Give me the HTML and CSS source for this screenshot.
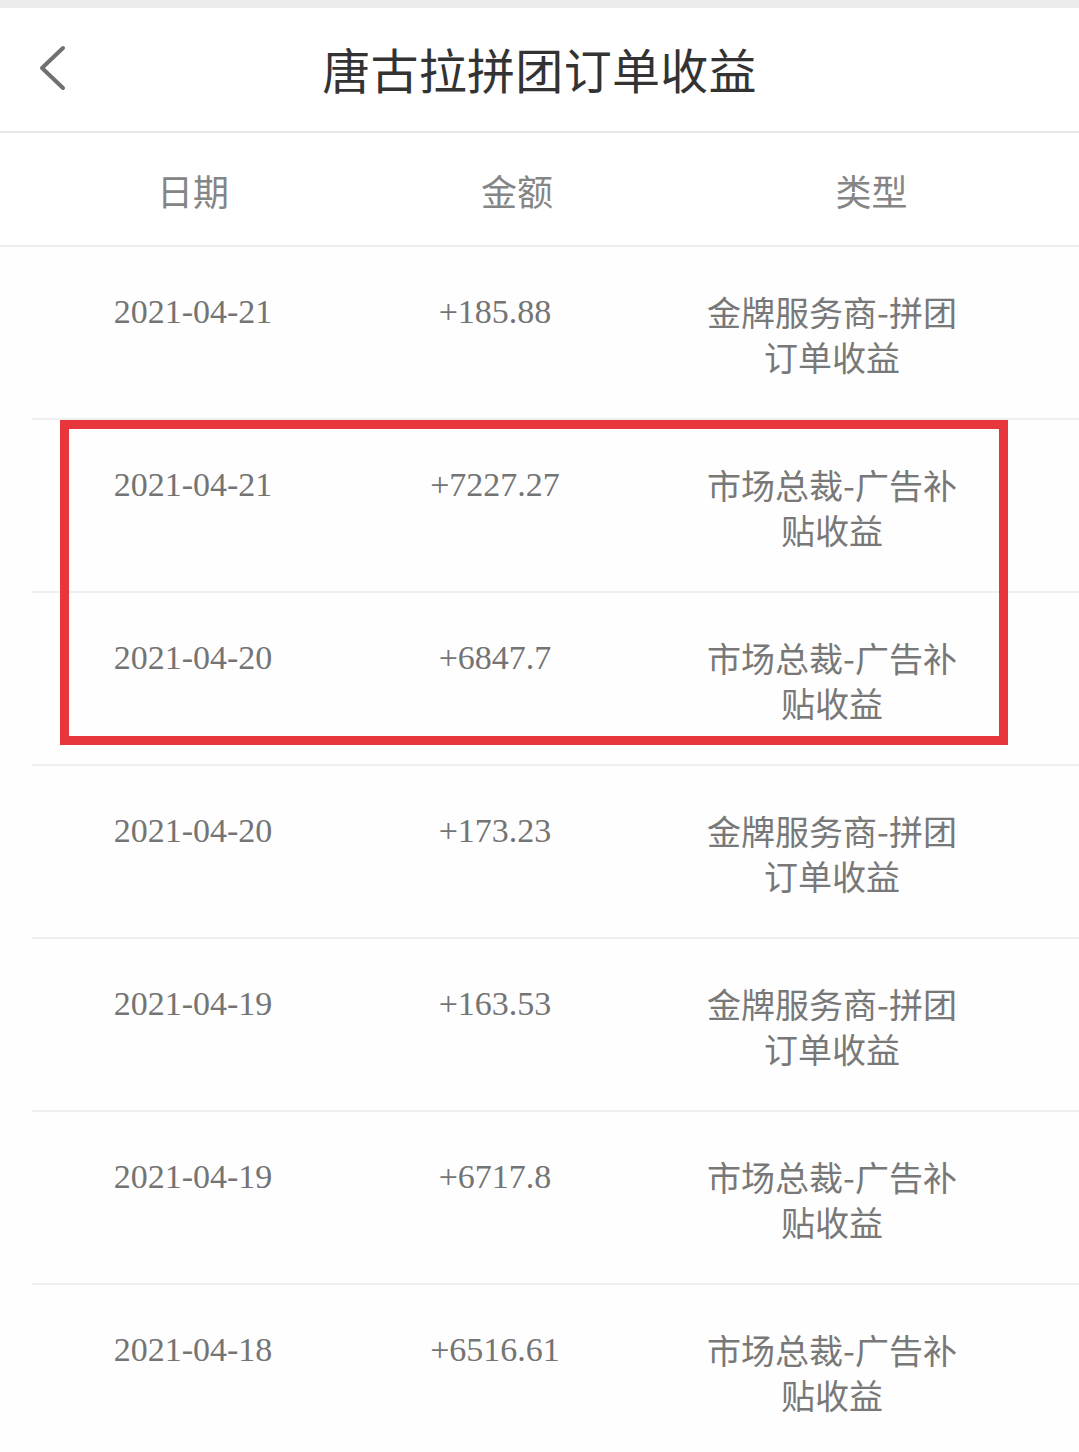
FILE: index.html
```html
<!DOCTYPE html>
<html lang="zh-CN">
<head>
<meta charset="utf-8">
<title>唐古拉拼团订单收益</title>
<link rel="stylesheet" href="styles.css">
</head>
<body>
<div class="page">
  <div class="status-strip"></div>
  <header class="nav">
    <svg class="back" width="40" height="60" viewBox="0 0 40 60">
      <polyline points="25,10 4,30 25,50" fill="none" stroke="#707070" stroke-width="4" stroke-linecap="round" stroke-linejoin="round"/>
    </svg>
    <h1 class="title">唐古拉拼团订单收益</h1>
  </header>
  <div class="thead">
    <div class="th th-date">日期</div>
    <div class="th th-amt">金额</div>
    <div class="th th-type">类型</div>
  </div>
  <div class="rows">
    <div class="row">
      <div class="cell date">2021-04-21</div>
      <div class="cell amt">+185.88</div>
      <div class="cell type">金牌服务商-拼团订单收益</div>
    </div>
    <div class="marked">
      <div class="row">
        <div class="cell date">2021-04-21</div>
        <div class="cell amt">+7227.27</div>
        <div class="cell type">市场总裁-广告补贴收益</div>
      </div>
      <div class="row">
        <div class="cell date">2021-04-20</div>
        <div class="cell amt">+6847.7</div>
        <div class="cell type">市场总裁-广告补贴收益</div>
      </div>
      <div class="highlight"></div>
    </div>
    <div class="row">
      <div class="cell date">2021-04-20</div>
      <div class="cell amt">+173.23</div>
      <div class="cell type">金牌服务商-拼团订单收益</div>
    </div>
    <div class="row">
      <div class="cell date">2021-04-19</div>
      <div class="cell amt">+163.53</div>
      <div class="cell type">金牌服务商-拼团订单收益</div>
    </div>
    <div class="row">
      <div class="cell date">2021-04-19</div>
      <div class="cell amt">+6717.8</div>
      <div class="cell type">市场总裁-广告补贴收益</div>
    </div>
    <div class="row">
      <div class="cell date">2021-04-18</div>
      <div class="cell amt">+6516.61</div>
      <div class="cell type">市场总裁-广告补贴收益</div>
    </div>
  </div>
</div>
</body>
</html>
```

FILE: styles.css
```css
* { box-sizing: border-box; }
html, body {
  margin: 0;
  padding: 0;
  background: #fefefe;
}
body {
  font-family: "Noto Sans CJK SC", "Noto Sans", sans-serif;
  width: 1079px;
  overflow-x: hidden;
}
.page {
  width: 1079px;
}
.status-strip {
  height: 8px;
  background: #ececec;
}
.nav {
  height: 125px;
  border-bottom: 2px solid #e6e6e6;
  display: flex;
  align-items: center;
  justify-content: center;
  position: relative;
  background: #ffffff;
}
.back {
  position: absolute;
  left: 38px;
  top: 30px;
}
.title {
  margin: 0;
  font-size: 48px;
  font-weight: 400;
  color: #333333;
  letter-spacing: 0.3px;
  line-height: 1;
  margin-top: -4px;
}
.thead {
  height: 114px;
  border-bottom: 2px solid #ececec;
  display: grid;
  grid-template-columns: 386px 262px 1fr;
  align-items: center;
  background: #ffffff;
}
.th {
  text-align: center;
  font-size: 36px;
  color: #858585;
  line-height: 1;
  margin-top: 2px;
}
.th-type {
  transform: translateX(8px);
}
.rows {
  margin-left: 32px;
}
.row {
  height: 173px;
  border-bottom: 2px solid #efefef;
  display: grid;
  grid-template-columns: 322px 282px 392px;
  align-items: start;
  padding-top: 42px;
}
.cell {
  text-align: center;
  font-size: 34px;
  line-height: 45px;
  color: #747474;
}
.date, .amt {
  font-family: "Liberation Serif", "Times New Roman", serif;
}
.type {
  padding: 0 60px;
  color: #787878;
}
.marked {
  position: relative;
}
.highlight {
  position: absolute;
  left: 28px;
  top: 0;
  width: 948px;
  height: 325px;
  border: 9px solid #e8373c;
  pointer-events: none;
}
```
